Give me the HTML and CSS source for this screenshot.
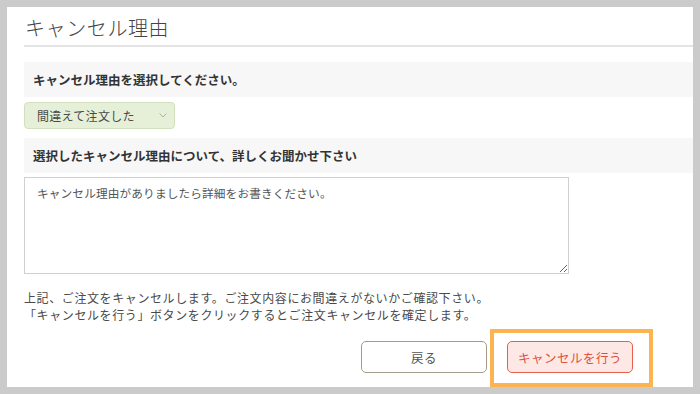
FILE: index.html
```html
<!DOCTYPE html>
<html lang="ja">
<head>
<meta charset="UTF-8">
<title>キャンセル理由</title>
<meta name="viewport" content="width=device-width, initial-scale=1.0">
<link rel="stylesheet" href="styles.css">
</head>
<body>

<div class="panel">
    <h1 class="page-title">キャンセル理由</h1>

    <div class="form-label">キャンセル理由を選択してください。</div>
    <div class="select-wrap">
        <select class="reason-select">
            <option>間違えて注文した</option>
            <option>注文内容を変更したい</option>
            <option>その他</option>
        </select>
        <svg class="select-arrow" width="8" height="5" viewBox="0 0 8 5"><path d="M0.5 0.5 L4 4 L7.5 0.5" fill="none" stroke="#b0b0a8" stroke-width="1"/></svg>
    </div>

    <div class="form-label">選択したキャンセル理由について、詳しくお聞かせ下さい</div>
    <textarea class="reason-text" placeholder="キャンセル理由がありましたら詳細をお書きください。"></textarea>

    <p class="notice">上記、ご注文をキャンセルします。ご注文内容にお間違えがないかご確認下さい。<br>「キャンセルを行う」ボタンをクリックするとご注文キャンセルを確定します。</p>

    <div class="actions">
        <button class="btn btn-back">戻る</button>
        <div class="btn-holder">
            <button class="btn btn-cancel">キャンセルを行う</button>
            <span class="highlight"></span>
        </div>
    </div>
</div>

</body>
</html>
```

FILE: styles.css
```css
body {
    margin: 0;
    padding: 7px 7px 7px 7px;
    background: #cbcbcb;
    font-family: "Noto Sans CJK JP", "Noto Sans", sans-serif;
    color: #333;
}
.panel {
    background: white;
    padding: 0 0 15px 17px;
    height: 365px;
}
.page-title {
    margin: 0;
    padding: 6px 0 2px 1px;
    font-size: 20px;
    line-height: 30px;
    font-weight: 300;
    color: #444;
    letter-spacing: 0.6px;
    border-bottom: 2px solid #e4e4e4;
}
.form-label {
    margin-top: 15px;
    height: 35px;
    line-height: 35px;
    padding-left: 9px;
    background: #f7f7f7;
    font-size: 12.5px;
    font-weight: bold;
    color: #333;
}
.form-label + .reason-text {
    margin-top: 4px;
}
.select-wrap + .form-label {
    margin-top: 9px;
}
.select-wrap {
    position: relative;
    width: 151px;
    margin-top: 5px;
}
.reason-select {
    appearance: none;
    -webkit-appearance: none;
    width: 151px;
    height: 27px;
    padding: 0 0 0 12px;
    background: #e6f0d8;
    border: 1px solid #d2e0bd;
    border-radius: 4px;
    font-family: inherit;
    font-size: 12px;
    color: #4a4a4a;
    letter-spacing: 0.3px;
}
.select-arrow {
    position: absolute;
    right: 8px;
    top: 11px;
}
.reason-text {
    display: block;
    box-sizing: border-box;
    width: 545px;
    height: 97px;
    padding: 6px 12px;
    border: 1px solid #d0d0d0;
    border-radius: 0;
    font-family: inherit;
    font-size: 11.7px;
    line-height: 18px;
    color: #333;
}
.reason-text::placeholder {
    color: #555;
    letter-spacing: 0.1px;
}
.notice {
    margin: 15px 0 0 0;
    font-size: 12px;
    line-height: 17px;
    letter-spacing: 0.6px;
    color: #4a4a4a;
}
.actions {
    display: flex;
    justify-content: flex-end;
    gap: 20px;
    margin-top: 18px;
    padding-right: 60px;
}
.btn {
    width: 126px;
    height: 32px;
    border-radius: 5px;
    font-family: inherit;
    font-size: 12.5px;
    letter-spacing: 0.5px;
    cursor: pointer;
}
.btn-back {
    background: white;
    border: 1px solid #a59d8c;
    color: #555;
}
.btn-cancel {
    background: #fde8e6;
    border: 1px solid #e8604c;
    color: #e0503c;
}
.btn-holder {
    position: relative;
}
.highlight {
    position: absolute;
    left: -17px;
    right: -20px;
    top: -12px;
    bottom: -14px;
    border: 4px solid #fbb44f;
}
```
